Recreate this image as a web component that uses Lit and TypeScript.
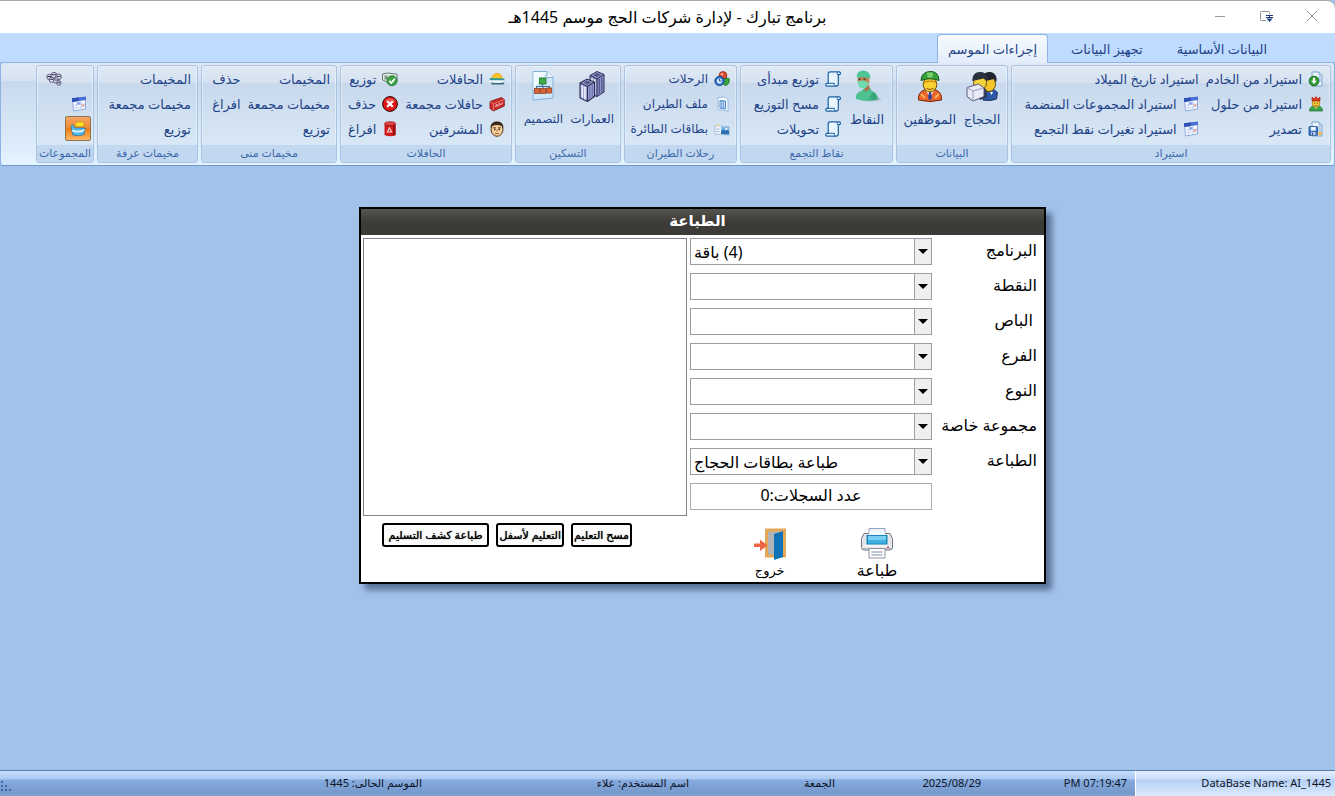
import { LitElement, html, svg, css, nothing, TemplateResult } from "lit";
import { customElement, property, state } from "lit/decorators.js";
import { classMap } from "lit/directives/class-map.js";

/* ---------- icons ---------- */

const small = (body: unknown) =>
  html`<svg width="16" height="16" viewBox="0 0 16 16" aria-hidden="true">${body}</svg>`;
const large = (body: unknown) =>
  html`<svg width="32" height="32" viewBox="0 0 32 32" aria-hidden="true">${body}</svg>`;

const page = svg`
  <path d="M4 1h7l3 3v11H4z" fill="#eef6fd" stroke="#7aa3cf" stroke-width="1"/>
  <path d="M11 1v3h3" fill="#c4dcf2" stroke="#7aa3cf" stroke-width=".8"/>
  <path d="M10 6h3M10 8h3M10 10h3" stroke="#6fa0d8" stroke-width=".9"/>`;

const icons: Record<string, () => TemplateResult> = {
  importServer: () => small(svg`${page}
    <circle cx="6" cy="10" r="4.900" fill="#2f9a35" stroke="#17661f" stroke-width=".8"/>
    <path d="M4.900 6.800h2.200v3h1.900L6 13 3 9.800h1.900z" fill="#fff"/>`),
  king: () => small(svg`
    <path d="M1.500 15c0-3.500 2.500-5.500 6.500-5.500s6.500 2 6.500 5.500z" fill="#3aa54a" stroke="#1d6e2b" stroke-width=".7"/>
    <path d="M5.500 10l2.500 3 2.500-3z" fill="#f6e08a"/>
    <ellipse cx="8" cy="7.200" rx="3.800" ry="3.900" fill="#f9cf3d" stroke="#a06a10" stroke-width=".7"/>
    <path d="M4 5V1.200l2.200 1.600L8 .6l1.800 2.200L12 1.200V5z" fill="#e23b22" stroke="#96200f" stroke-width=".6"/>
    <path d="M6.300 7.200h.9M8.900 7.200h.9" stroke="#402000" stroke-width="1"/>
    <path d="M6.500 9.400q1.500 1 3 0" stroke="#7a3b00" stroke-width=".7" fill="none"/>`),
  exportDisk: () => small(svg`${page}
    <rect x="1" y="5.500" width="8.500" height="9" rx=".8" fill="#3b76c4" stroke="#1e4a8c" stroke-width=".8"/>
    <rect x="2.800" y="6" width="5" height="3.600" fill="#f2f7fd"/>
    <rect x="3" y="11.200" width="4.500" height="3" fill="#c9d8ea"/>
    <rect x="3.800" y="11.700" width="1.300" height="2.300" fill="#27508e"/>
    <path d="M10.500 11h3v3h-3z" fill="#f3b52e"/>`),
  table: () => small(svg`
    <path d="M1.500 3L14.500 1.500V13L2.500 15z" fill="#fbfcff" stroke="#8fa6dc" stroke-width="1"/>
    <path d="M1 2.300L15 .6V4L1.300 6z" fill="#4a6fd6"/>
    <path d="M1 2.300L8 1.500v3.500L1.300 6z" fill="#2f50b4"/>
    <path d="M2 9.300l12-1.400M2.200 12.200l12-1.700M5.800 6v8M10 5.400v8" stroke="#c3d1ef" stroke-width=".9"/>
    <path d="M6.300 6.300l3.200-.5v2.600l-3.200.4z" fill="#8ba6ee"/>
    <path d="M10.500 8.600l3-.4v2l-3 .4z" fill="#e8a398"/>`),
  scroll: () => small(svg`
    <path d="M5 .8h9.300c1.500 0 1.500 2.900 0 2.900h-1v8.800c0 1.700-.9 2.700-2.200 2.700H2C.3 15.200.3 12.300 2 12.300h1.200V3C3.200 1.600 3.800.8 5 .8z" fill="#eaf6ff" stroke="#1b62a5" stroke-width="1.200"/>
    <path d="M13.300 3.700c-1.500 0-1.500-1.800-.5-2.600M2.200 12.300h7.300c-.5 1 0 2.300 1.200 2.700" fill="none" stroke="#1b62a5" stroke-width="1"/>`),
  balls: () => small(svg`
    <circle cx="9" cy="4.400" r="3.900" fill="#d9482f" stroke="#8f2413" stroke-width=".7"/>
    <circle cx="8" cy="3.300" r="1.200" fill="#f6b3a2"/>
    <path d="M9.500 8.500c2-2 5-1.500 5.800-.8.400 3-.5 6.500-4.300 6.800-2-.8-2.500-4-1.500-6z" fill="#38a63b" stroke="#1a6a20" stroke-width=".7"/>
    <circle cx="5.500" cy="10" r="4.700" fill="#2c74c9" stroke="#163f80" stroke-width=".8"/>
    <circle cx="5.500" cy="10" r="2.600" fill="#dbeefe"/>
    <path d="M5.500 8v2h2" stroke="#163f80" stroke-width=".9" fill="none"/>`),
  flightFile: () => small(svg`
    <path d="M4 1.500l7-.5 3 3v11l-10-1.500z" fill="#f6fbff" stroke="#8db0d6" stroke-width=".9"/>
    <path d="M6 4.500l5.500.5v8L6 12z" fill="#d8eafb" stroke="#4d8bce" stroke-width="1"/>
    <path d="M7.800 5v7M9.700 5v7.500" stroke="#4d8bce" stroke-width=".9"/>`),
  card: () => small(svg`
    <path d="M.8 4.500l14.400 1v8.500L.8 13z" fill="#eef5fc" stroke="#9db7d2" stroke-width=".8"/>
    <path d="M7 5.400l8 .4v7.700l-8-.4z" fill="#7db9e8"/>
    <path d="M7 10.500l2.500-2.500 2 2 1.500-1.500 2 1.500v3.500l-8-.4z" fill="#2c6fb4"/>
    <circle cx="12.500" cy="8" r="1" fill="#fff"/>
    <path d="M2 8h3.500M2 10.500h3.500" stroke="#9bb3cb" stroke-width=".9"/>
    <path d="M1.500 4.500l3-1.500 2 1.800z" fill="#f3d58b"/>`),
  bus: () => small(svg`
    <path d="M2.800 8a5.300 5.600 0 0 1 10.600 0z" fill="#fcc72b" stroke="#ee9a1a" stroke-width=".9"/>
    <path d="M.3 7l15.200.5-.5 2.300H1.500z" fill="#2f9a9c"/>
    <path d="M1 9.300h14v2.200H1z" fill="#eefafb"/>
    <path d="M2 11.200q6 1.800 13.500 0l-1 2.200H3z" fill="#3b6a78"/>`),
  ticket: () => small(svg`
    <path d="M1 5.500L12.500 1.500l2.800 2v6.500L4.300 15 1 12.500z" fill="#c92b2b" stroke="#7d1414" stroke-width=".8"/>
    <path d="M1 5.500l3.500 2.400 10.800-4.400M4.500 7.900v6.500" fill="none" stroke="#f08b83" stroke-width=".8"/>
    <path d="M6.500 11l1.200-2.600.6 2.200M9.500 9.800l1-2.600.9 2M12.500 8.600l1-2.200" fill="none" stroke="#fbdcd6" stroke-width=".9"/>`),
  face: () => small(svg`
    <ellipse cx="8" cy="8.500" rx="6" ry="6.800" fill="#f5cb99" stroke="#5b3718" stroke-width="1"/>
    <path d="M1.700 7.500C1.200 2.800 4 .6 8 .6s6.800 2.200 6.300 6.900L12.600 4.800Q8 3.300 3.400 4.800z" fill="#3c2615"/>
    <path d="M4.300 6.800h2.500M9.200 6.800h2.500" stroke="#3c2615" stroke-width=".9"/>
    <circle cx="5.800" cy="8.400" r=".8" fill="#2a1a0c"/><circle cx="10.200" cy="8.400" r=".8" fill="#2a1a0c"/>
    <path d="M8 8.500v2M6 12.500h4" stroke="#9c5a30" stroke-width=".9" fill="none"/>`),
  moneyCheck: () => small(svg`
    <path d="M.5 3l5-1 9.500 1.200v7.300L5 11 .5 9z" fill="#dfe9e2" stroke="#5d7068" stroke-width=".9"/>
    <path d="M2.500 4.500h3v4h-3z" fill="#7d958a"/>
    <circle cx="10" cy="9.800" r="5" fill="#3fa447" stroke="#1c6b28" stroke-width=".8"/>
    <path d="M7.300 9.800l2 2.200 3.600-4.300" fill="none" stroke="#fff" stroke-width="1.800"/>`),
  cancel: () => small(svg`
    <circle cx="8" cy="8" r="7.400" fill="#e01919" stroke="#2b0505" stroke-width="1"/>
    <path d="M2.800 5.500a5.800 5.800 0 0 1 10.400 0q-5 2-10.400 0z" fill="#f06a62" opacity=".7"/>
    <path d="M5.200 5.200l5.600 5.600M10.800 5.200l-5.600 5.600" stroke="#fff" stroke-width="2.200"/>`),
  bin: () => small(svg`
    <path d="M2.500 2.500v11.500q5.500 2.500 11 0V2.500z" fill="#cf1c1f"/>
    <path d="M11 2.500v12.600l2.500-1V2.500z" fill="#9e1013"/>
    <ellipse cx="8" cy="2.600" rx="5.500" ry="1.900" fill="#e8484a" stroke="#8e0e10" stroke-width=".7"/>
    <path d="M7.500 7l2.200 4H5.300z" fill="none" stroke="#fbd9d9" stroke-width="1.100"/>`),
  crowd: () => small(svg`
    <g fill="#e1e1ee" stroke="#4b4870" stroke-width=".9">
      <circle cx="3.500" cy="6" r="2.700"/><circle cx="8" cy="4.300" r="2.900"/><circle cx="12.500" cy="5.800" r="2.900"/>
      <circle cx="5.800" cy="8.800" r="2.600"/><circle cx="10.300" cy="9.500" r="2.800"/>
      <circle cx="12.800" cy="12" r="2.200"/>
    </g>
    <path d="M1.500 5.500h3.500M6 3.800h4M10.500 5.300h4M4.200 8.300h3.200M8.500 9h3.600M11.500 11.800h2.500" stroke="#2e2b4d" stroke-width="1"/>`),
  printing: () => small(svg`
    <path d="M5 5.500L6.500 1h6.800l.7 4.500z" fill="#ffdf2e" stroke="#c79a00" stroke-width=".6"/>
    <path d="M1 5l1.500-1.500L5 7h10.300l-1.500 6.500q-5 2.300-11 .5z" fill="#54b9e6" stroke="#1a6f9e" stroke-width=".7"/>
    <path d="M2 8.500q6 2.500 12.500-.2l-.3 2Q8 12.500 2.300 10.800z" fill="#dff4fd"/>`),
  pilgrims: () => large(svg`
    <path d="M17 30l2-9 8-2 4.500 3.500-1 6.500q-6 2.500-13.500 1z" fill="#2d58a8" stroke="#14264f" stroke-width=".9"/>
    <ellipse cx="23" cy="14" rx="6.500" ry="7.500" fill="#f4c52a" stroke="#5d4308" stroke-width=".9"/>
    <path d="M15.500 12C15 5 19 1.500 24 2s8 5 6 10.500l-2-3.500z" fill="#20252f"/>
    <ellipse cx="14" cy="12.500" rx="6.500" ry="7.500" fill="#f7d23f" stroke="#5d4308" stroke-width=".9"/>
    <path d="M6.500 11C6 4.500 10 1.500 15 2s7.500 5 5.500 9l-3-2.500z" fill="#2a303c"/>
    <path d="M6 18q8-3 14 1l1 8-7 3z" fill="#28364f"/>
    <path d="M1 17.500L12.500 14l5.500 4v8.500L7 31l-6-4.500z" fill="#e9eaf5" stroke="#55587d" stroke-width="1"/>
    <path d="M1 17.500l6 3.500 11-3M7 21v10" fill="none" stroke="#8f93b8" stroke-width=".9"/>
    <path d="M24 22l1.500 3 1.500-3z" fill="#fff"/>`),
  employee: () => large(svg`
    <path d="M4.500 30q-1-8 7-10.500h9q8 2.500 7 10.500-11.500 3-23 0z" fill="#e9662d" stroke="#7c240b" stroke-width="1"/>
    <path d="M11.500 20l4.500 7 4.500-7z" fill="#fff"/>
    <path d="M15 22h2l1 6-2 2.500-2-2.500z" fill="#31449b"/>
    <path d="M7 24l4 4M25 24l-4 4" stroke="#f7b14d" stroke-width="2"/>
    <ellipse cx="16" cy="14.500" rx="6.800" ry="7.500" fill="#f8d233" stroke="#6b4a06" stroke-width="1"/>
    <path d="M9.500 11.500q6.500-2 13 0v1.500q-6.500-2-13 0z" fill="#d28c12"/>
    <path d="M7 10.500Q7.500 2 16 1.500T25 10.500Q16 7 7 10.500z" fill="#38a13c" stroke="#125c1a" stroke-width="1"/>
    <path d="M13 2.500h6l-.5 5h-5z" fill="#78cf6d"/>
    <path d="M12.500 18.500q3.500 2 7 0" fill="none" stroke="#8b4a00" stroke-width="1"/>`),
  surgeon: () => large(svg`
    <ellipse cx="20" cy="29" rx="10" ry="2.500" fill="#8d9db0" opacity=".5"/>
    <path d="M5 29q-1-6 5-8l4-3h5l2 3q6 2 6 8.500-11 3-22-.5z" fill="#4fc08f"/>
    <path d="M13 17l1 5 5-3-1-4z" fill="#a8764c"/>
    <path d="M18 30q2-7 4-8 4 2 4 7.500z" fill="#3aa779"/>
    <ellipse cx="12.500" cy="10.500" rx="6" ry="7" fill="#b88659"/>
    <path d="M5.500 7.500Q5.500.5 12.500.5 19.500 1 19.500 8.500L13 7z" fill="#4cc596"/>
    <path d="M6 11.500l6-1 5.500 2-2 5q-4 2-7 0z" fill="#6fdab0"/>
    <path d="M7.500 9.200h2M12.500 9.200h2" stroke="#3d2615" stroke-width="1.200"/>`),
  buildings: () => large(svg`
    <path d="M14 5.500L21 1.500l7 3V22l-7 4.500-7-3z" fill="#8f96c9" stroke="#2b2b52" stroke-width="1"/>
    <path d="M14 5.500l7 3.500v17.500M21 9l7-4.500" fill="none" stroke="#2b2b52" stroke-width="1"/>
    <path d="M16 8v15M18.800 9.200v15" stroke="#eceefb" stroke-width="1.500"/>
    <path d="M23.300 9v15M25.800 7.300v15" stroke="#4e548f" stroke-width="1.300"/>
    <path d="M17 5.300l4-2.300 4 1.700-4 2.500z" fill="#555a8c"/>
    <path d="M4 13l7-4 7.500 3v14.500l-7 5L4 28z" fill="#9fa6d8" stroke="#2b2b52" stroke-width="1.100"/>
    <path d="M4 13l7.500 3.500v15M11.500 16.500l7-4.500" fill="none" stroke="#2b2b52" stroke-width="1.100"/>
    <path d="M6.300 15.500v12M9 16.800v12.500" stroke="#f3f4fd" stroke-width="1.500"/>
    <path d="M13.800 16.500v12M16.300 15v12" stroke="#6b71ad" stroke-width="1.300"/>
    <path d="M7 12.800l4-2.300 4.500 1.800-4 2.500z" fill="#555a8c"/>`),
  layout: () => large(svg`
    <path d="M6 1.500h14l6 6V28l-20 2z" fill="#cfe7fa" stroke="#84b3da" stroke-width="1"/>
    <path d="M20 1.500v6h6" fill="#f4fbff" stroke="#84b3da" stroke-width="1"/>
    <path d="M6.500 2h13L6.500 20z" fill="#f0f9ff"/>
    <path d="M15.500 14v3M9.500 19v-2.500h13V19M16 17v2" fill="none" stroke="#3f6d9e" stroke-width="1.200"/>
    <rect x="12.500" y="8" width="6.500" height="6" fill="#3fae49" stroke="#1c7327" stroke-width=".8"/>
    <g fill="#d86637" stroke="#96401c" stroke-width=".8"><rect x="7.500" y="18.500" width="5" height="5"/><rect x="13.500" y="18.500" width="5" height="5"/><rect x="19.500" y="18" width="5" height="5"/></g>`),
  door: () => large(svg`
    <path d="M11 .5h21v29H11z" fill="#e6a757"/>
    <path d="M14 3.500h15v23H14z" fill="#b0b4b8"/>
    <path d="M20 6l9-3v26l-9 3z" fill="#0f73b8"/>
    <path d="M0 15.500h6v-4l7.500 6-7.500 5.500v-4H0z" fill="#ee6744"/>`),
  printer: () => large(svg`
    <path d="M8 .5h16v9H8z" fill="#edf3fc" stroke="#94a4bd" stroke-width="1"/>
    <path d="M3 5.500h26l2.500 5v9q0 2.500-2.500 2.500H3Q.5 22 .5 19.500v-9z" fill="#e5e6ea" stroke="#70747e" stroke-width="1"/>
    <path d="M8 4h16v4H8z" fill="#f5f9ff"/>
    <path d="M5.500 7h21v9.500h-21z" fill="#1b86bd"/>
    <path d="M7 8h18v4H7z" fill="#79cdf0"/><path d="M7 12h18v3.500H7z" fill="#3fb0df"/>
    <path d="M3 18h26" stroke="#f9fafc" stroke-width="1.500"/>
    <rect x="26" y="18.500" width="2" height="1.200" fill="#c91f2c"/>
    <path d="M2 21h28" stroke="#a7abb5" stroke-width="1.500"/>
    <path d="M8 20.500h16v9.500H8z" fill="#fff" stroke="#8d93a0" stroke-width="1"/>
    <path d="M10.500 24h11M10.500 27h11" stroke="#7d8bb4" stroke-width="1"/>`),
};

/* ---------- ribbon ---------- */

interface Item {
  text?: string;
  title?: string;
  icon?: string;
  big?: boolean;
  active?: boolean;
  far?: boolean;
}
interface Group {
  label: string;
  compact?: boolean;
  items: Item[];
}

const groups: Group[] = [
  {
    label: "استيراد",
    items: [
      { text: "استيراد من الخادم", icon: "importServer" },
      { text: "استيراد من حلول", icon: "king" },
      { text: "تصدير", icon: "exportDisk" },
      { text: "استيراد تاريخ الميلاد" },
      { text: "استيراد المجموعات المنضمة", icon: "table" },
      { text: "استيراد تغيرات نقط التجمع", icon: "table" },
    ],
  },
  {
    label: "البيانات",
    items: [
      { text: "الحجاج", icon: "pilgrims", big: true },
      { text: "الموظفين", icon: "employee", big: true },
    ],
  },
  {
    label: "نقاط التجمع",
    items: [
      { text: "النقاط", icon: "surgeon", big: true },
      { text: "توزيع مبدأى", icon: "scroll" },
      { text: "مسح التوزيع", icon: "scroll" },
      { text: "تحويلات", icon: "scroll" },
    ],
  },
  {
    label: "رحلات الطيران",
    compact: true,
    items: [
      { text: "الرحلات", icon: "balls" },
      { text: "ملف الطيران", icon: "flightFile" },
      { text: "بطاقات الطائرة", icon: "card" },
    ],
  },
  {
    label: "التسكين",
    compact: true,
    items: [
      { text: "العمارات", icon: "buildings", big: true },
      { text: "التصميم", icon: "layout", big: true },
    ],
  },
  {
    label: "الحافلات",
    items: [
      { text: "الحافلات", icon: "bus" },
      { text: "حافلات مجمعة", icon: "ticket" },
      { text: "المشرفين", icon: "face" },
      { text: "توزيع", icon: "moneyCheck" },
      { text: "حذف", icon: "cancel" },
      { text: "افراغ", icon: "bin" },
    ],
  },
  {
    label: "مخيمات منى",
    items: [
      { text: "المخيمات" },
      { text: "مخيمات مجمعة" },
      { text: "توزيع" },
      { text: "حذف" },
      { text: "افراغ" },
    ],
  },
  {
    label: "مخيمات عرفة",
    items: [{ text: "المخيمات" }, { text: "مخيمات مجمعة" }, { text: "توزيع" }],
  },
  {
    label: "المجموعات",
    items: [
      { title: "المجموعات", icon: "crowd", far: true },
      { title: "الجدول", icon: "table" },
      { title: "الطباعة", icon: "printing", active: true },
    ],
  },
];

@customElement("ribbon-group")
export class RibbonGroup extends LitElement {
  @property({ attribute: false }) group!: Group;

  static styles = css`
    :host {
      display: flex;
      flex-direction: column;
      min-width: 0;
      box-sizing: border-box;
      border: 1px solid #a9c4e2;
      border-radius: 3px;
      background: linear-gradient(#dfe9f5 0, #d6e2f1 17%, #c8d9ed 18%, #d8e7f5 80%);
      box-shadow: inset 0 0 0 1px rgba(255, 255, 255, 0.35);
    }
    .items {
      flex: 1;
      display: grid;
      grid-auto-flow: column;
      grid-template-rows: repeat(3, 25px);
      justify-content: start;
      justify-items: start;
      column-gap: 7px;
      padding: 0 6px 4px;
      font-size: 13px;
    }
    .compact {
      font-size: 12px;
    }
    button {
      display: flex;
      align-items: center;
      gap: 6px;
      padding: 0;
      border: 0;
      background: none;
      color: #1e4287;
      font: inherit;
      white-space: nowrap;
      cursor: pointer;
    }
    svg {
      flex: none;
    }
    .big {
      grid-row: 1 / -1;
      flex-direction: column;
      align-items: center;
      gap: 7px;
      min-width: 38px;
      padding-top: 4px;
      line-height: 20px;
    }
    .far {
      margin-inline-start: 25px;
    }
    .active {
      padding: 0 4px;
      margin-inline-start: -4px;
      border: 1px solid #8b7654;
      border-radius: 2px;
      background: linear-gradient(#f4a566, #f08c35 45%, #ee7c14 50%, #fdb765);
    }
    .label {
      height: 17px;
      line-height: 16px;
      text-align: center;
      font-size: 11px;
      color: #3e6aaa;
      background: #c2d8f0;
      border-radius: 0 0 2px 2px;
      white-space: nowrap;
    }
  `;

  render() {
    return html`
      <div class=${classMap({ items: true, compact: !!this.group.compact })}>
        ${this.group.items.map(
          (i) => html`<button
            class=${classMap({ big: !!i.big, active: !!i.active, far: !!i.far })}
            aria-label=${i.title ?? nothing}
          >
            ${i.icon ? icons[i.icon]() : nothing}${i.text ? html`<span>${i.text}</span>` : nothing}
          </button>`
        )}
      </div>
      <div class="label">${this.group.label}</div>
    `;
  }
}

/* ---------- print dialog ---------- */

const fields: { id: string; label: string; value: string }[] = [
  { id: "program", label: "البرنامج", value: "(4) باقة" },
  { id: "point", label: "النقطة", value: "" },
  { id: "bus", label: "\u00a0الباص", value: "" },
  { id: "branch", label: "الفرع", value: "" },
  { id: "kind", label: "النوع", value: "" },
  { id: "special", label: "مجموعة خاصة", value: "" },
  { id: "print", label: "الطباعة", value: "طباعة بطاقات الحجاج" },
];

@customElement("print-dialog")
export class PrintDialog extends LitElement {
  static styles = css`
    :host {
      display: block;
      width: 687px;
      max-width: 100%;
      box-sizing: border-box;
      border: 2px solid #000;
      background: #fff;
      color: #000;
      font-size: 16px;
      box-shadow: 6px 6px 6px rgba(40, 60, 95, 0.6);
    }
    h2 {
      margin: 0;
      height: 26px;
      line-height: 22px;
      padding-inline-start: 10px;
      text-align: center;
      font-size: 15px;
      font-weight: bold;
      color: #fff;
      background: linear-gradient(#56544e, #3d3b37 50%);
    }
    form {
      display: grid;
      grid-template-columns: minmax(0, 1fr) 242px 324px;
      column-gap: 3px;
      padding: 3px 7px 2px 2px;
    }
    .fields {
      grid-column: 1 / 3;
      display: grid;
      grid-template-columns: subgrid;
      grid-auto-rows: 27px;
      row-gap: 8px;
      padding-bottom: 6px;
    }
    label {
      line-height: 24px;
      white-space: nowrap;
    }
    .combo {
      display: grid;
      direction: ltr;
    }
    .combo > * {
      grid-area: 1 / 1;
    }
    select {
      appearance: none;
      direction: rtl;
      width: 100%;
      height: 27px;
      box-sizing: border-box;
      padding: 0 20px 0 3px;
      border: 1px solid #9c9da0;
      border-radius: 0;
      background: #fff;
      color: inherit;
      font: inherit;
      text-align: left;
      text-align-last: left;
    }
    .arrow {
      justify-self: end;
      display: grid;
      place-items: center;
      width: 18px;
      box-sizing: border-box;
      border: 1px solid #9c9da0;
      background: #efefef;
      pointer-events: none;
    }
    output {
      grid-column: 2;
      border: 1px solid #acacac;
      line-height: 23px;
      text-align: center;
    }
    .list {
      border: 1px solid #82858c;
    }
    .actions {
      grid-column: 2;
      display: flex;
      justify-content: center;
      gap: 67px;
      padding: 12px 0 0 25px;
    }
    button {
      padding: 0;
      border: 0;
      background: none;
      color: inherit;
      font: inherit;
      white-space: nowrap;
      cursor: pointer;
    }
    .action {
      display: flex;
      flex-direction: column;
      align-items: center;
      min-width: 40px;
      line-height: 20px;
    }
    .exit {
      font-size: 13px;
    }
    .action svg {
      flex: none;
    }
    .marks {
      display: flex;
      align-items: start;
      gap: 7px;
      padding: 7px 55px 0 0;
    }
    .mark {
      height: 24px;
      padding: 0 1px;
      border: 2px solid #000;
      border-radius: 3px;
      background: #fbfbfb;
      font-size: 11px;
      line-height: 18px;
      text-shadow: 0 0 1px #000;
    }
    .wide {
      padding: 0 5px;
    }
  `;

  render() {
    return html`
      <h2>الطباعة</h2>
      <form @submit=${(e: Event) => e.preventDefault()}>
        <div class="fields">
          ${fields.map(
            (f) => html`<label for=${f.id}>${f.label}</label>
              <div class="combo">
                <select id=${f.id}>
                  <option>${f.value}</option>
                </select>
                <span class="arrow">
                  <svg width="10" height="5" viewBox="0 0 10 5" aria-hidden="true"><path d="M0 0h10L5 5z" /></svg>
                </span>
              </div>`
          )}
          <output>عدد السجلات:0</output>
        </div>
        <div class="list" role="listbox" aria-label="السجلات"></div>
        <div class="actions">
          <button class="action">${icons.printer()}<span>طباعة</span></button>
          <button class="action exit">${icons.door()}<span>خروج</span></button>
        </div>
        <div class="marks">
          <button class="mark">مسح التعليم</button>
          <button class="mark">التعليم لأسفل</button>
          <button class="mark wide">طباعة كشف التسليم</button>
        </div>
      </form>
    `;
  }
}

/* ---------- window ---------- */

const tabs = ["البيانات الأساسية", "تجهيز البيانات", "إجراءات الموسم"];

@customElement("app-root")
export class AppRoot extends LitElement {
  @state() private current = 2;

  static styles = css`
    :host {
      display: flex;
      flex-direction: column;
      min-height: 100vh;
      direction: rtl;
      font-family: "Noto Sans", "DejaVu Sans", sans-serif;
      font-size: 13px;
      background: #a3c2ea;
    }
    .title {
      display: grid;
      grid-template-columns: 1fr auto 1fr;
      align-items: center;
      height: 33px;
      box-sizing: border-box;
      border-top: 1px solid #a8a8a8;
      border-radius: 0 8px 0 0;
      background: #fff;
    }
    h1 {
      margin: 0;
      font-size: 16px;
      font-weight: normal;
      color: #000;
    }
    .controls {
      display: flex;
      gap: 30px;
      padding-inline-start: 15px;
    }
    .controls button {
      display: flex;
      padding: 0;
      border: 0;
      background: none;
    }
    .tabs {
      display: flex;
      gap: 12px;
      height: 29px;
      padding: 1px 57px 0 0;
      box-sizing: border-box;
      background: #bfdbff;
    }
    .tab {
      padding: 0 10px;
      border: 1px solid transparent;
      border-bottom: 0;
      border-radius: 4px 4px 0 0;
      background: none;
      color: #1e4287;
      font: inherit;
      cursor: pointer;
    }
    .tab.on {
      z-index: 1;
      margin-bottom: -1px;
      border-color: #8db2e3;
      background: linear-gradient(#f6faff, #e3edf9);
    }
    .ribbon {
      display: grid;
      grid-template-columns: 320fr 112fr 153fr 113fr 106fr 172fr 136fr 101fr 58fr 32fr;
      column-gap: 3px;
      padding: 2px 3px 2px 0;
      border: 1px solid #8db2e3;
      border-bottom-color: #6f9bd3;
      border-radius: 3px;
      background: linear-gradient(#dfe9f5 0, #d6e2f1 17%, #c8d9ed 18%, #e3f3ff);
    }
    ribbon-group {
      height: 98px;
    }
    main {
      flex: 1;
      display: flex;
      justify-content: center;
      align-items: start;
      padding: 41px 0 41px 70px;
    }
    footer {
      display: grid;
      grid-template-columns: 200fr 146fr 146fr 146fr 267fr 430fr;
      height: 26px;
      box-sizing: border-box;
      border-top: 1px solid #567db1;
      background: linear-gradient(#c6ddfd, #aac8f1 32%, #86abdf 36%, #7699cb 90%, #8aa9d4);
      color: #0c1426;
      font-size: 11px;
      line-height: 24px;
      white-space: nowrap;
    }
    .cell {
      padding-inline-start: 8px;
    }
    .db {
      padding-inline-start: 4px;
      border-left: 1px solid #fff;
      background: linear-gradient(#e2eefe, #c9defa 32%, #b6d0f5 36%, #dbe9fc);
    }
    .season {
      display: flex;
      justify-content: space-between;
      align-items: start;
    }
    .grip {
      align-self: end;
      margin-bottom: 4px;
    }
  `;

  render() {
    return html`
      <header class="title">
        <div class="controls">
          <button aria-label="إغلاق">
            <svg width="16" height="16" viewBox="0 0 16 16"><path d="M3 2l10 10M13 2L3 12" stroke="#8a8a8a" fill="none" /></svg>
          </button>
          <button aria-label="استعادة">
            <svg width="16" height="16" viewBox="0 0 16 16">
              <path d="M8 11.500H3.500q-1 0-1-1v-7q0-1 1-1h7q1 0 1 1V5" stroke="#8f8f8f" fill="none" />
              <path d="M8 6.500h7M8 8.500h7" stroke="#1c3a7a" />
              <path d="M11 6h1v3h-1zM8.500 9.500h6l-3 3.500z" fill="#1c3a7a" />
            </svg>
          </button>
          <button aria-label="تصغير">
            <svg width="16" height="16" viewBox="0 0 16 16"><path d="M3 7.500h10" stroke="#9a9a9a" /></svg>
          </button>
        </div>
        <h1>برنامج تبارك - لإدارة شركات الحج موسم 1445هـ</h1>
      </header>
      <nav class="tabs" role="tablist">
        ${tabs.map(
          (t, i) => html`<button
            role="tab"
            aria-selected=${i === this.current ? "true" : "false"}
            class=${classMap({ tab: true, on: i === this.current })}
            @click=${() => (this.current = i)}
          >${t}</button>`
        )}
      </nav>
      <section class="ribbon">
        ${groups.map((g) => html`<ribbon-group .group=${g}></ribbon-group>`)}
      </section>
      <main><print-dialog></print-dialog></main>
      <footer>
        <div class="cell db"><bdo dir="ltr">DataBase Name: AI_1445</bdo></div>
        <div class="cell"><bdo dir="ltr">PM 07:19:47</bdo></div>
        <div class="cell"><bdo dir="ltr">2025/08/29</bdo></div>
        <div class="cell">الجمعة</div>
        <div class="cell">اسم المستخدم: علاء</div>
        <div class="cell season">
          <span>الموسم الحالى: 1445</span>
          <svg class="grip" width="12" height="12" viewBox="0 0 12 12" aria-hidden="true">
            <path d="M1 1h2v2H1zM1 5h2v2H1zM5 5h2v2H5zM1 9h2v2H1zM5 9h2v2H5zM9 9h2v2H9z" fill="#3f66a3" />
          </svg>
        </div>
      </footer>
    `;
  }
}
